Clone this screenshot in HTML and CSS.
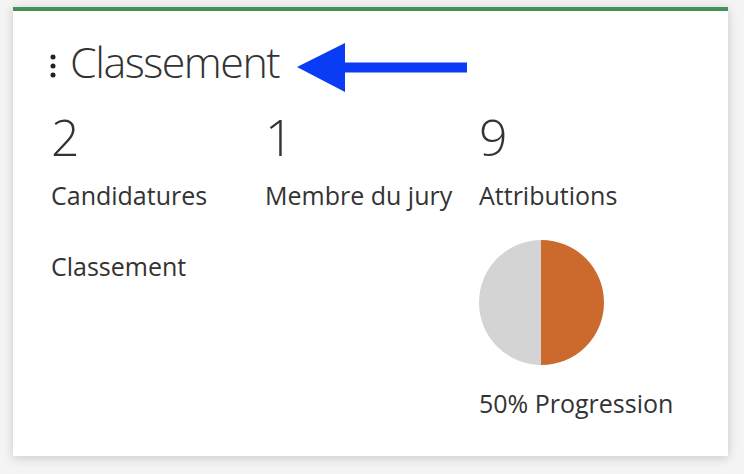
FILE: index.html
```html
<!DOCTYPE html>
<html>
  <head>
    <title>Classement</title>
    <link rel="stylesheet" href="styles.css">
  </head>
  <body>
    <div class="card">
      <div class="card-header">
        <svg class="drag-handle" width="8" height="26" viewBox="0 0 8 26">
          <circle cx="4" cy="4" r="2.5" />
          <circle cx="4" cy="13" r="2.5" />
          <circle cx="4" cy="22" r="2.5" />
        </svg>
        <h2>Classement</h2>
        <svg class="arrow" width="170" height="50" viewBox="0 0 170 50">
          <polygon points="0,24 48,0 48,19.5 170,19.5 170,29.5 48,29.5 48,49" />
        </svg>
      </div>
      <div class="stats">
        <div class="stat">
          <span class="stat-value">2</span>
          <span class="stat-label">Candidatures</span>
        </div>
        <div class="stat">
          <span class="stat-value">1</span>
          <span class="stat-label">Membre du jury</span>
        </div>
        <div class="stat">
          <span class="stat-value">9</span>
          <span class="stat-label">Attributions</span>
        </div>
        <div class="stat stat-link">
          <span class="stat-label">Classement</span>
        </div>
        <div class="stat"></div>
        <div class="stat">
          <div class="pie"></div>
          <span class="stat-label">50% Progression</span>
        </div>
      </div>
    </div>
  </body>
</html>
```
FILE: styles.css
```css
body {
  font-family: "Open Sans", Arial, sans-serif;
  background: #f4f4f4;
  margin: 0;
  padding: 7px 16px 18px 13px;
}

.card {
  background-color: #fff;
  border-top: 4px solid #44915a;
  box-shadow: 0 2px 10px rgba(0, 0, 0, 0.18);
  padding: 0 20px 0 36px;
  box-sizing: border-box;
  height: 449px;
}

.card-header {
  display: flex;
  align-items: flex-start;
  height: 97px;
}

.drag-handle {
  fill: #222;
  margin-top: 42px;
}

.card-header h2 {
  margin: 21px 0 0 13px;
  font-size: 43px;
  line-height: normal;
  font-weight: 300;
  letter-spacing: -1.5px;
  color: #333;
}

.arrow {
  fill: #0a3cf5;
  margin: 32px 0 0 18px;
}

.stats {
  display: grid;
  grid-template-columns: 214px 214px 214px;
  row-gap: 28px;
  margin-left: 2px;
}

.stat {
  display: flex;
  flex-direction: column;
}

.stat-value {
  font-size: 50px;
  font-weight: 300;
  color: #333;
  line-height: 58px;
}

.stat-label {
  font-size: 25px;
  color: #333;
  line-height: 34px;
}

.stat-value + .stat-label {
  margin-top: 12px;
}

.stat-link {
  padding-top: 9px;
}

.pie {
  width: 125px;
  height: 125px;
  border-radius: 50%;
  background: linear-gradient(90deg, #d4d4d4 50%, #cc692d 50%);
  margin-bottom: 21px;
}
```
